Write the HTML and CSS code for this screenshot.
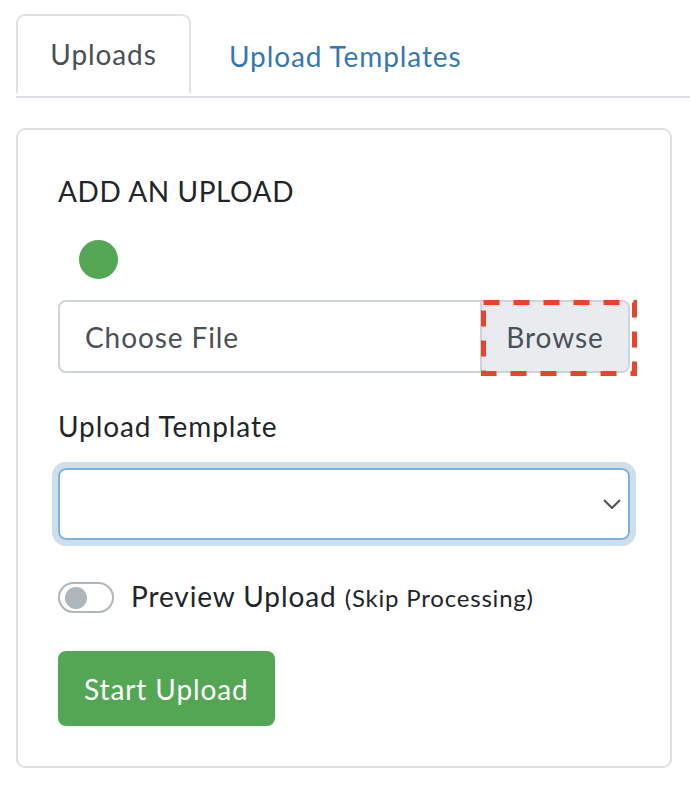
FILE: index.html
```html
<!DOCTYPE html>
<html lang="en">
<head>
  <meta charset="UTF-8">
  <title>Uploads</title>
  <link rel="stylesheet" href="styles.css">
</head>
<body>
<div class="page">
  <ul class="nav-tabs">
    <li><a href="#" class="tab active">Uploads</a></li>
    <li><a href="#" class="tab">Upload Templates</a></li>
  </ul>

  <div class="card">
    <div class="card-body">
      <h5 class="card-title">ADD AN UPLOAD</h5>
      <div class="status-dot"></div>

      <div class="file-input">
        <span class="file-label">Choose File</span>
        <span class="file-browse">Browse</span>
        <svg class="highlight" width="156" height="76" viewBox="0 0 156 76"><rect x="2.5" y="2.5" width="151" height="71" fill="none" stroke="#e8432b" stroke-width="5" stroke-dasharray="16 14"/></svg>
      </div>

      <label class="field-label">Upload Template</label>
      <div class="select-box">
        <svg class="chevron" width="18" height="10" viewBox="0 0 18 10"><polyline points="1,1 9,9 17,1" fill="none" stroke="#495057" stroke-width="2"/></svg>
      </div>

      <div class="switch-row">
        <span class="switch"><span class="knob"></span></span>
        <span class="switch-text">Preview Upload <small>(Skip Processing)</small></span>
      </div>

      <button class="btn-start">Start Upload</button>
    </div>
  </div>
</div>
</body>
</html>
```

FILE: styles.css
```css
html, body {
  margin: 0;
  padding: 0;
  background: #fff;
  color: #212529;
  font-family: 'Lato', 'Noto Sans', sans-serif;
  font-size: 28px;
  letter-spacing: 0.9px;
}
.page {
  padding: 14px 18px 0 16px;
}
.nav-tabs {
  display: flex;
  list-style: none;
  margin: 0 -18px 0 0;
  padding: 0;
  border-bottom: 2px solid #dee2e6;
}
.tab {
  display: flex;
  align-items: center;
  height: 80px;
  margin-bottom: -2px;
  border: 2px solid transparent;
  border-radius: 9px 9px 0 0;
  color: #3777b0;
  text-decoration: none;
  padding: 0 36px;
}
.tab.active {
  width: 175px;
  box-sizing: border-box;
  justify-content: center;
  padding: 0;
  color: #495057;
  background: #fff;
  border-color: #dee2e6 #dee2e6 #fff;
}
.card {
  margin-top: 30px;
  border: 2px solid #dfdfdf;
  border-radius: 9px;
}
.card-body {
  padding: 40px;
  display: flex;
  flex-direction: column;
  align-items: flex-start;
}
.card-title {
  margin: 0;
  font-size: 28px;
  font-weight: 400;
  line-height: 42px;
  letter-spacing: 0.6px;
}
.status-dot {
  width: 39px;
  height: 39px;
  border-radius: 50%;
  background: #53a653;
  margin: 28px 0 21px 21px;
}
.file-input {
  position: relative;
  display: flex;
  align-self: stretch;
  height: 73px;
  box-sizing: border-box;
  border: 2px solid #ced4da;
  border-radius: 8px;
  color: #495057;
}
.file-label {
  flex: 1;
  display: flex;
  align-items: center;
  padding-left: 25px;
}
.file-browse {
  display: flex;
  align-items: center;
  justify-content: center;
  width: 146px;
  background: #e9ecef;
  border-left: 2px solid #ced4da;
  border-radius: 0 6px 6px 0;
}
.highlight {
  position: absolute;
  top: -2px;
  right: -9px;
}
.field-label {
  margin: 32px 0 21px;
  line-height: 42px;
}
.select-box {
  position: relative;
  align-self: stretch;
  height: 72px;
  box-sizing: border-box;
  border: 2px solid #7ab3e0;
  border-radius: 8px;
  box-shadow: 0 0 0 6px #cfdeeb;
}
.chevron {
  position: absolute;
  right: 7px;
  top: 29px;
}
.switch-row {
  display: flex;
  align-items: center;
  margin-top: 35px;
  line-height: 42px;
}
.switch {
  position: relative;
  width: 56px;
  height: 31px;
  box-sizing: border-box;
  border: 2px solid #adb5bd;
  border-radius: 16px;
  margin-right: 17px;
}
.knob {
  position: absolute;
  left: 5px;
  top: 3px;
  width: 22px;
  height: 22px;
  border-radius: 50%;
  background: #adb5bd;
}
.switch-text small {
  font-size: 24px;
  letter-spacing: 0.8px;
}
.btn-start {
  margin-top: 32px;
  height: 75px;
  padding: 0 26px;
  border: none;
  border-radius: 8px;
  background: #53a653;
  color: #fff;
  font-family: inherit;
  font-size: 28px;
  letter-spacing: 0.9px;
}
```
